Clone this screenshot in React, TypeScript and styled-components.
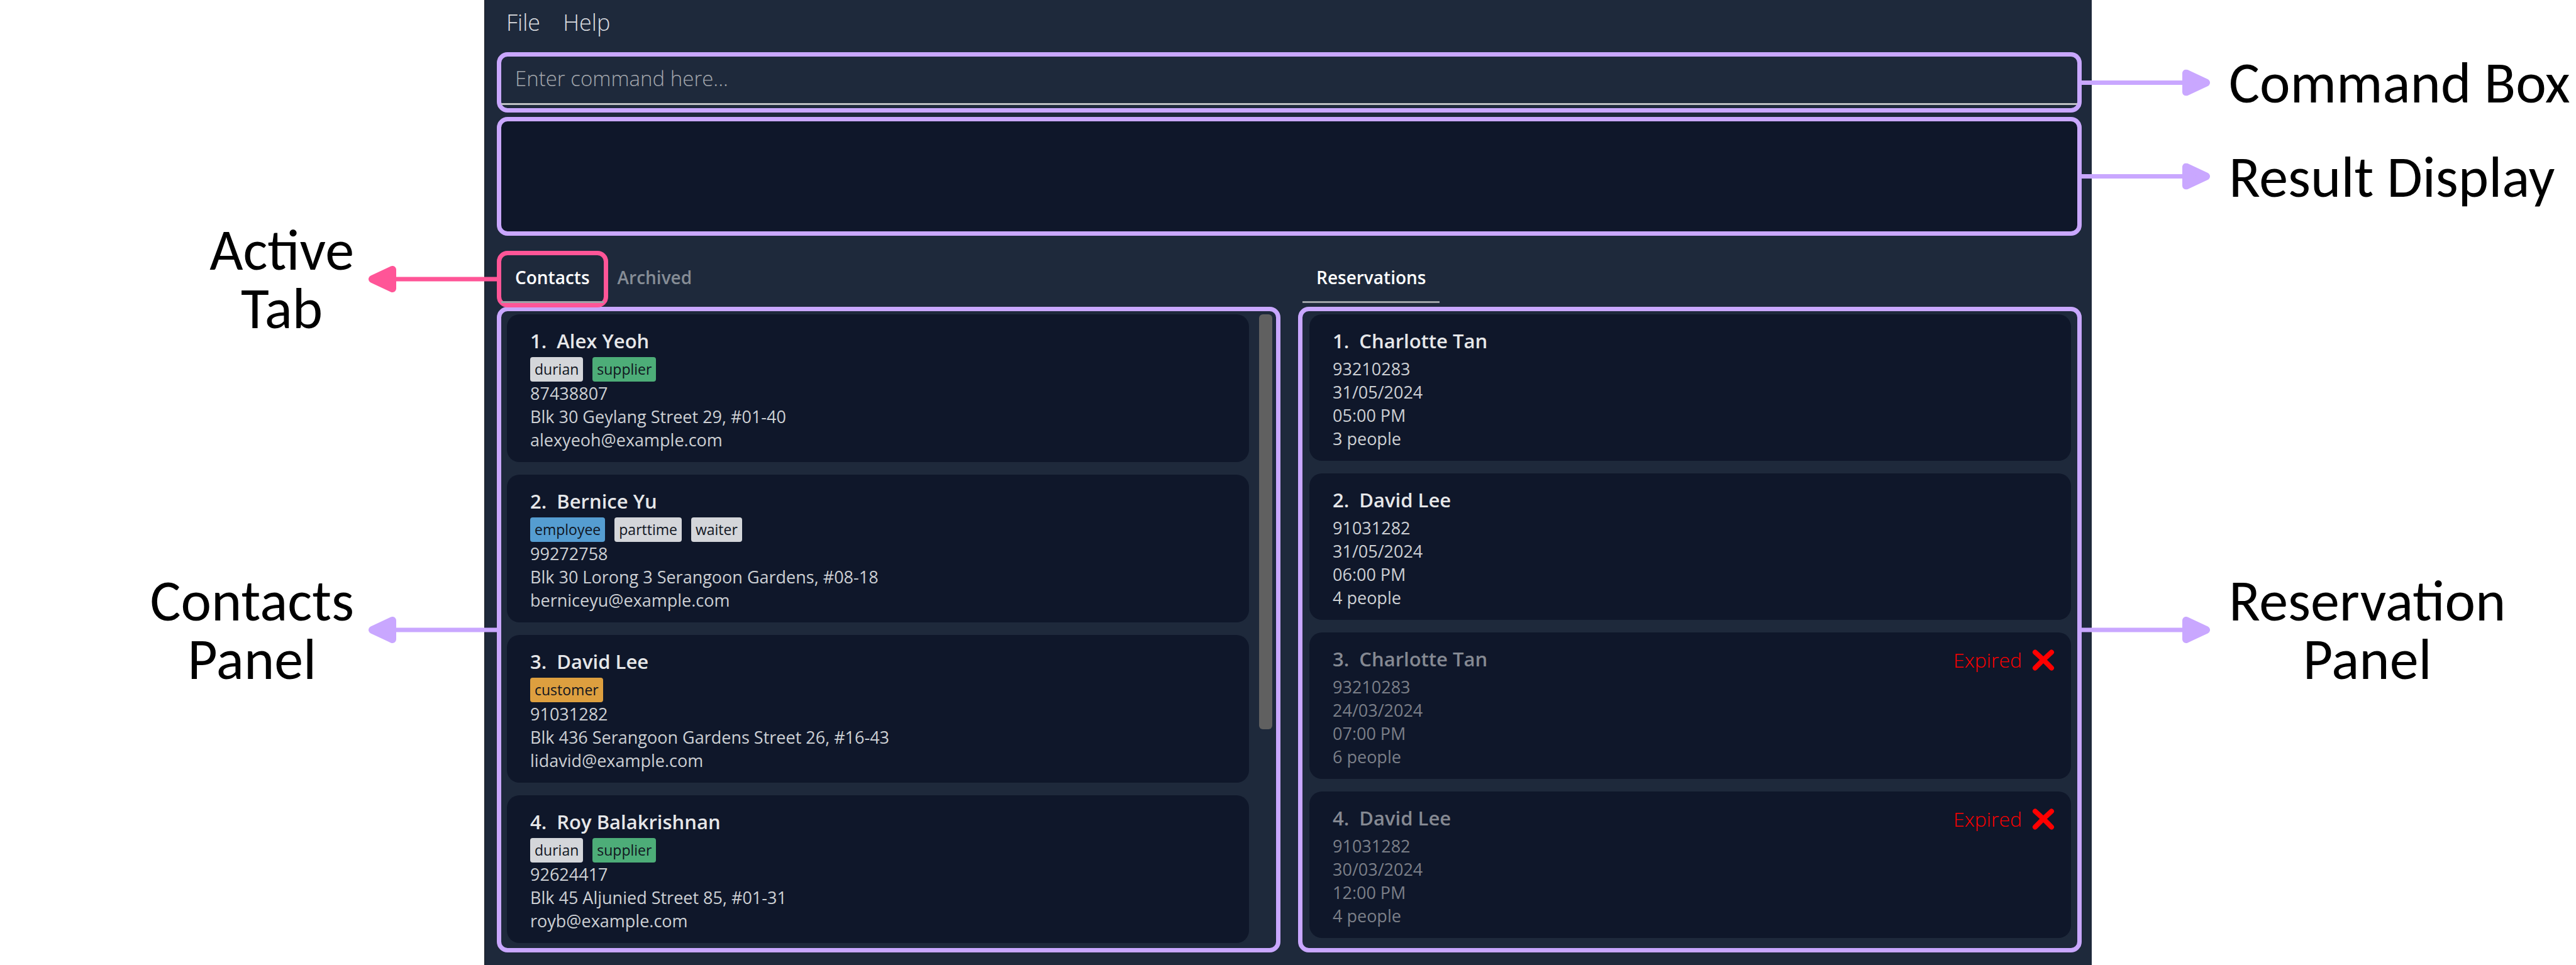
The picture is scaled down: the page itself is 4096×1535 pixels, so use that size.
import React from "react";
import styled, { createGlobalStyle, css } from "styled-components";

const lilac = "#c9a7ff";
const pink = "#ff5597";
const slate = "#1e293b";
const night = "#0f172a";

const GlobalStyle = createGlobalStyle`
  *, *::before, *::after { box-sizing: border-box; }
  body { margin: 0; background: #ffffff; }
  button, input, textarea { font-family: inherit; margin: 0; }
`;

const Page = styled.main`
  min-height: 100vh;
  display: flex;
  padding: 0 770px;
  overflow: hidden;
  font-family: "Open Sans", "Noto Sans", sans-serif;
`;

const AppWindow = styled.div`
  flex: 1;
  min-width: 0;
  display: flex;
  flex-direction: column;
  padding: 0 16px 20px 19px;
  background: ${slate};
  border-left: 1px solid #15181f;
`;

const MenuBar = styled.nav`
  height: 83px;
  display: flex;
  align-items: flex-start;
  gap: 36px;
  padding: 12px 15px;
`;

const MenuButton = styled.button`
  padding: 0;
  border: 0;
  background: none;
  color: #dcdee1;
  font-size: 36px;
  font-weight: 300;
  line-height: 48px;
`;

const outlined = css`
  position: relative;
  border: 7px solid ${lilac};
  border-radius: 17px;
`;

const CommandBox = styled.section`
  ${outlined}
  height: 96px;
`;

const CommandInput = styled.input`
  display: block;
  width: 100%;
  height: 77px;
  padding: 0 22px 6px;
  border: 0;
  border-bottom: 3px solid #bfc1c4;
  border-radius: 0;
  outline: none;
  background: transparent;
  color: #ffffff;
  font-size: 33px;
  font-weight: 300;
  &::placeholder { color: #a3a7ad; opacity: 1; }
`;

const ResultBox = styled.section`
  ${outlined}
  height: 189px;
  margin-top: 7px;
  background: ${night};
`;

const ResultText = styled.textarea`
  display: block;
  width: 100%;
  height: 100%;
  padding: 12px 22px;
  border: 0;
  outline: none;
  resize: none;
  background: transparent;
  color: #ffffff;
  font-size: 27px;
`;

const Columns = styled.div`
  flex: 1;
  display: grid;
  grid-template-columns: 1fr 1fr;
  gap: 28px;
  margin-top: 24px;
`;

const Column = styled.div`
  min-width: 0;
  display: flex;
  flex-direction: column;
`;

const TabRow = styled.div`
  position: relative;
  z-index: 1;
  height: 90px;
  margin-bottom: -1px;
  display: flex;
`;

const Tab = styled.div<{ $highlighted?: boolean }>`
  position: relative;
  display: flex;
  border: 7px solid ${(p) => (p.$highlighted ? pink : "transparent")};
  border-radius: 17px;
`;

const TabButton = styled.button<{ $active?: boolean }>`
  padding: 0 ${(p) => (p.$active ? 22 : 8)}px 3px;
  border: 0;
  border-bottom: 3px solid ${(p) => (p.$active ? "#9ea2a7" : "transparent")};
  background: none;
  color: ${(p) => (p.$active ? "#ffffff" : "#868d96")};
  font-size: 28px;
  font-weight: 600;
  line-height: 38px;
`;

const Panel = styled.section<{ $side: "left" | "right" }>`
  ${outlined}
  flex: 1;
  display: flex;
  gap: 16px;
  padding: ${(p) => (p.$side === "left" ? "5px 6px 8px 9px" : "5px 10px 16px 11px")};
`;

const CardList = styled.ul`
  flex: 1;
  margin: 0;
  padding: 0;
  list-style: none;
  display: flex;
  flex-direction: column;
  gap: 20px;
`;

const Scrollbar = styled.div`
  width: 21px;
`;

const ScrollThumb = styled.div`
  height: 66%;
  border-radius: 6px;
  background: #606060;
`;

const Card = styled.li<{ $faded?: boolean }>`
  display: flex;
  justify-content: space-between;
  padding: 22px 26px 17px 37px;
  border-radius: 20px;
  background: ${night};
  color: ${(p) => (p.$faded ? "#7b7f88" : "#cdd0d4")};
`;

const Name = styled.h2<{ $faded?: boolean }>`
  margin: 0 0 6px;
  color: ${(p) => (p.$faded ? "#858992" : "#e6e7e9")};
  font-size: 31px;
  font-weight: 600;
  line-height: 40px;
  white-space: pre;
`;

const Line = styled.p`
  margin: 0;
  font-size: 27px;
  line-height: 37px;
`;

const Tags = styled.div`
  display: flex;
  gap: 15px;
`;

const Tag = styled.span<{ $color: string }>`
  height: 39px;
  padding: 0 7px;
  border-radius: 4px;
  background: ${(p) => p.$color};
  color: #10151f;
  font-size: 23px;
  font-weight: 500;
  line-height: 38px;
`;

const Expired = styled.div`
  display: flex;
  align-items: center;
  gap: 16px;
  height: 44px;
  color: #ff0000;
  font-size: 32px;
  font-weight: 300;
  line-height: 44px;
`;

const Callout = styled.div<{ $side: "left" | "right" }>`
  position: absolute;
  top: 50%;
  ${(p) => (p.$side === "left" ? "right" : "left")}: calc(100% + 7px);
  transform: translateY(-50%);
  display: flex;
  flex-direction: ${(p) => (p.$side === "left" ? "row-reverse" : "row")};
  align-items: center;
  gap: ${(p) => (p.$side === "left" ? 23 : 30)}px;
`;

const CalloutLabel = styled.span`
  color: #000000;
  font-family: Carlito, Lato, sans-serif;
  font-size: 92px;
  font-weight: 400;
  line-height: 93px;
  text-align: center;
  white-space: pre;
`;

function Arrow({ side, color }: { side: "left" | "right"; color: string }) {
  return (
    <svg width="204" height="42" viewBox="0 0 204 42" aria-hidden="true">
      <g fill={color} transform={side === "left" ? "translate(204 0) scale(-1 1)" : undefined}>
        <rect x="0" y="17.5" width="164" height="7" />
        <path d="M166 6 L166 36 L198 21 Z" stroke={color} strokeWidth="12" strokeLinejoin="round" />
      </g>
    </svg>
  );
}

function Note({ side, color = lilac, text }: { side: "left" | "right"; color?: string; text: string }) {
  return (
    <Callout $side={side}>
      <Arrow side={side} color={color} />
      <CalloutLabel>{text}</CalloutLabel>
    </Callout>
  );
}

function Cross() {
  return (
    <svg width="36" height="36" viewBox="0 0 36 36" aria-hidden="true">
      <path d="M5 5.500 Q17 16 31 30.500 M31 5.500 Q17 18 5 30.500" fill="none" stroke="#ff0000" strokeWidth="8" strokeLinecap="round" />
    </svg>
  );
}

const tagColors: Record<string, string> = {
  supplier: "#4dad78",
  employee: "#559dd1",
  customer: "#dd9f3f",
};

const contacts = [
  { name: "Alex Yeoh", tags: ["durian", "supplier"], phone: "87438807", address: "Blk 30 Geylang Street 29, #01-40", email: "alexyeoh@example.com" },
  { name: "Bernice Yu", tags: ["employee", "parttime", "waiter"], phone: "99272758", address: "Blk 30 Lorong 3 Serangoon Gardens, #08-18", email: "berniceyu@example.com" },
  { name: "David Lee", tags: ["customer"], phone: "91031282", address: "Blk 436 Serangoon Gardens Street 26, #16-43", email: "lidavid@example.com" },
  { name: "Roy Balakrishnan", tags: ["durian", "supplier"], phone: "92624417", address: "Blk 45 Aljunied Street 85, #01-31", email: "royb@example.com" },
];

const reservations = [
  { name: "Charlotte Tan", phone: "93210283", date: "31/05/2024", time: "05:00 PM", people: 3, expired: false },
  { name: "David Lee", phone: "91031282", date: "31/05/2024", time: "06:00 PM", people: 4, expired: false },
  { name: "Charlotte Tan", phone: "93210283", date: "24/03/2024", time: "07:00 PM", people: 6, expired: true },
  { name: "David Lee", phone: "91031282", date: "30/03/2024", time: "12:00 PM", people: 4, expired: true },
];

export default function App() {
  return (
    <Page>
      <GlobalStyle />
      <AppWindow>
        <MenuBar>
          <MenuButton type="button">File</MenuButton>
          <MenuButton type="button">Help</MenuButton>
        </MenuBar>

        <CommandBox>
          <CommandInput type="text" aria-label="Command" placeholder="Enter command here..." />
          <Note side="right" text="Command Box" />
        </CommandBox>

        <ResultBox>
          <ResultText readOnly aria-label="Result" />
          <Note side="right" text="Result Display" />
        </ResultBox>

        <Columns>
          <Column>
            <TabRow role="tablist">
              <Tab $highlighted>
                <TabButton type="button" role="tab" aria-selected="true" $active>Contacts</TabButton>
                <Note side="left" color={pink} text={"Active\nTab"} />
              </Tab>
              <Tab>
                <TabButton type="button" role="tab" aria-selected="false">Archived</TabButton>
              </Tab>
            </TabRow>
            <Panel $side="left">
              <CardList>
                {contacts.map((c, i) => (
                  <Card key={c.name}>
                    <div>
                      <Name>{`${i + 1}.  ${c.name}`}</Name>
                      <Tags>
                        {c.tags.map((t) => (
                          <Tag key={t} $color={tagColors[t] ?? "#d4d6da"}>{t}</Tag>
                        ))}
                      </Tags>
                      <Line>{c.phone}</Line>
                      <Line>{c.address}</Line>
                      <Line>{c.email}</Line>
                    </div>
                  </Card>
                ))}
              </CardList>
              <Scrollbar>
                <ScrollThumb />
              </Scrollbar>
              <Note side="left" text={"Contacts\nPanel"} />
            </Panel>
          </Column>

          <Column>
            <TabRow role="tablist">
              <Tab>
                <TabButton type="button" role="tab" aria-selected="true" $active>Reservations</TabButton>
              </Tab>
            </TabRow>
            <Panel $side="right">
              <CardList>
                {reservations.map((r, i) => (
                  <Card key={i} $faded={r.expired}>
                    <div>
                      <Name $faded={r.expired}>{`${i + 1}.  ${r.name}`}</Name>
                      <Line>{r.phone}</Line>
                      <Line>{r.date}</Line>
                      <Line>{r.time}</Line>
                      <Line>{`${r.people} people`}</Line>
                    </div>
                    {r.expired && (
                      <Expired>
                        <span>Expired</span>
                        <Cross />
                      </Expired>
                    )}
                  </Card>
                ))}
              </CardList>
              <Note side="right" text={"Reservation\nPanel"} />
            </Panel>
          </Column>
        </Columns>
      </AppWindow>
    </Page>
  );
}
